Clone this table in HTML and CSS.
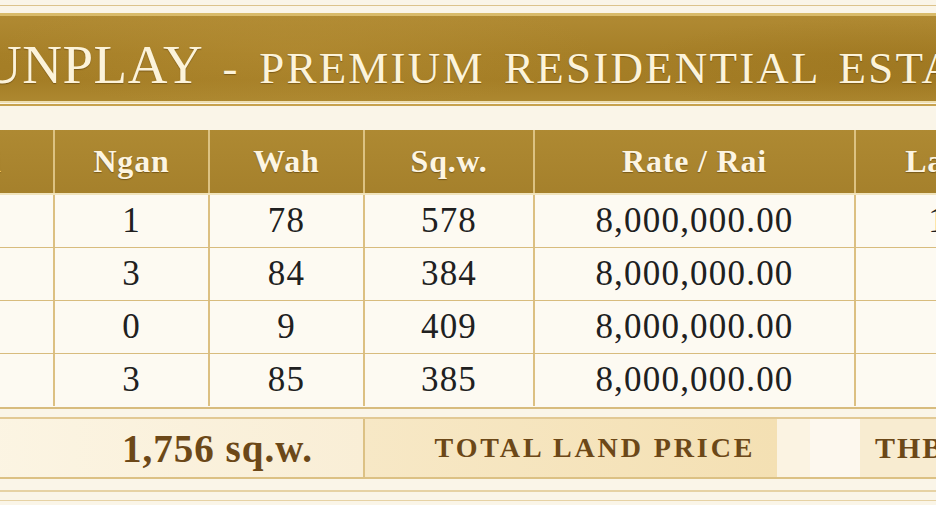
FILE: index.html
```html
<!DOCTYPE html>
<html lang="en">
<head>
<meta charset="utf-8">
<title>Sunplay - Premium Residential Estate</title>
<link rel="stylesheet" href="styles.css">
</head>
<body>
<div class="page">
  <div class="topline"></div>
  <header class="banner">
    <h1 class="title"><span class="title-big">SUNPLAY</span> <span class="dash">-</span> PREMIUM RESIDENTIAL ESTATE</h1>
  </header>
  <div class="banner-rule"></div>

  <div class="grid">
    <div class="row head">
      <div class="cell">Rai</div>
      <div class="cell">Ngan</div>
      <div class="cell">Wah</div>
      <div class="cell">Sq.w.</div>
      <div class="cell">Rate / Rai</div>
      <div class="cell">Land Price (THB)</div>
    </div>
    <div class="row data">
      <div class="cell">1</div>
      <div class="cell">1</div>
      <div class="cell">78</div>
      <div class="cell">578</div>
      <div class="cell">8,000,000.00</div>
      <div class="cell">11,560,000.00</div>
    </div>
    <div class="row data">
      <div class="cell">0</div>
      <div class="cell">3</div>
      <div class="cell">84</div>
      <div class="cell">384</div>
      <div class="cell">8,000,000.00</div>
      <div class="cell">7,680,000.00</div>
    </div>
    <div class="row data">
      <div class="cell">1</div>
      <div class="cell">0</div>
      <div class="cell">9</div>
      <div class="cell">409</div>
      <div class="cell">8,000,000.00</div>
      <div class="cell">8,180,000.00</div>
    </div>
    <div class="row data last">
      <div class="cell">0</div>
      <div class="cell">3</div>
      <div class="cell">85</div>
      <div class="cell">385</div>
      <div class="cell">8,000,000.00</div>
      <div class="cell">7,700,000.00</div>
    </div>
  </div>

  <div class="total">
    <div class="total-area">1,756 sq.w.</div>
    <div class="total-label">TOTAL LAND PRICE</div>
    <div class="total-gap"><span class="patch"></span></div>
    <div class="total-value">THB 35,120,000.00</div>
  </div>

  <div class="bottom-rule one"></div>
  <div class="bottom-rule two"></div>
</div>
</body>
</html>
```

FILE: styles.css
```css
* {
  box-sizing: border-box;
}

html,
body {
  margin: 0;
  padding: 0;
}

body {
  width: 936px;
  height: 505px;
  overflow: hidden;
  background: #faf5e8;
  font-family: "Liberation Serif", "Times New Roman", serif;
}

.page {
  width: 1318px;
  margin-left: -100px;
  padding-top: 5px;
}

.topline {
  height: 1px;
  background: #dcc38c;
}

.banner {
  margin-top: 7px;
  height: 90px;
  padding-top: 21px;
  padding-left: 51px;
  border-top: 3px solid #d9bb6a;
  border-bottom: 2px solid #efdfb0;
  background:
    radial-gradient(ellipse 300px 60px at 30% 40%, rgba(190, 150, 60, 0.35), rgba(190, 150, 60, 0)),
    radial-gradient(ellipse 260px 50px at 75% 60%, rgba(150, 110, 25, 0.35), rgba(150, 110, 25, 0)),
    linear-gradient(180deg, #b08a33 0%, #a67f27 45%, #a47d25 75%, #ad8830 100%);
  white-space: nowrap;
  overflow: hidden;
}

.title {
  margin: 0;
  font-family: "Liberation Serif", "Times New Roman", serif;
  font-weight: normal;
  font-size: 45px;
  line-height: 1;
  letter-spacing: 2.2px;
  word-spacing: 6px;
  color: #fcf3da;
  text-shadow: 0 1px 1px rgba(70, 45, 5, 0.45);
}

.title-big {
  font-size: 55px;
  letter-spacing: 0.5px;
}

.banner-rule {
  margin-top: 1px;
  height: 2px;
  background: #c7a24e;
}

.grid {
  margin-top: 24px;
}

.row {
  display: grid;
  grid-template-columns: 155px 155px 155px 170px 321px 362px;
}

.cell {
  display: flex;
  align-items: center;
  justify-content: center;
  white-space: nowrap;
  border-right: 2px solid #dcc082;
}

.head {
  height: 65px;
  border-bottom: 2px solid #f1e4bd;
}

.head .cell {
  background:
    linear-gradient(180deg, rgba(190, 150, 60, 0.25), rgba(150, 110, 30, 0.2)),
    #a9852f;
  color: #fdf5e2;
  font-size: 32px;
  font-weight: bold;
  letter-spacing: 0.8px;
  text-shadow: 0 1px 1px rgba(70, 45, 5, 0.5);
  border-right-color: #dcc282;
}

.data {
  height: 53px;
  border-bottom: 1px solid #d8bc7e;
  background: #fdfaf2;
}

.data.last {
  height: 55px;
  border-bottom-width: 2px;
  padding-bottom: 1px;
}

.data .cell {
  font-size: 35px;
  letter-spacing: 1.2px;
  color: #202020;
}

.total {
  margin-top: 8px;
  height: 62px;
  display: grid;
  grid-template-columns: 465px 412px 83px 358px;
  border-top: 2px solid #e2c994;
  border-bottom: 2px solid #dcc184;
  color: #6c4818;
  font-weight: bold;
  white-space: nowrap;
}

.total-area {
  display: flex;
  align-items: center;
  justify-content: flex-end;
  padding-right: 50px;
  font-size: 39px;
  letter-spacing: 1px;
  background: linear-gradient(90deg, #fcf6e6 0%, #f9eed6 100%);
  border-right: 2px solid #dcc184;
}

.total-label {
  display: flex;
  align-items: center;
  justify-content: center;
  padding-left: 48px;
  font-size: 28px;
  letter-spacing: 2.9px;
  background: linear-gradient(90deg, #f7e8c6 0%, #f4e0b3 100%);
}

.total-gap {
  display: flex;
  background: #fbf3e2;
}

.patch {
  margin-left: 33px;
  width: 50px;
  background: #fdf8ee;
}

.total-value {
  display: flex;
  align-items: center;
  padding-left: 15px;
  font-size: 30px;
  letter-spacing: 2px;
  background: #f8ecd1;
}

.bottom-rule {
  background: #e6d2a4;
}

.bottom-rule.one {
  margin-top: 11px;
  height: 2px;
}

.bottom-rule.two {
  margin-top: 8px;
  height: 1px;
}
```
